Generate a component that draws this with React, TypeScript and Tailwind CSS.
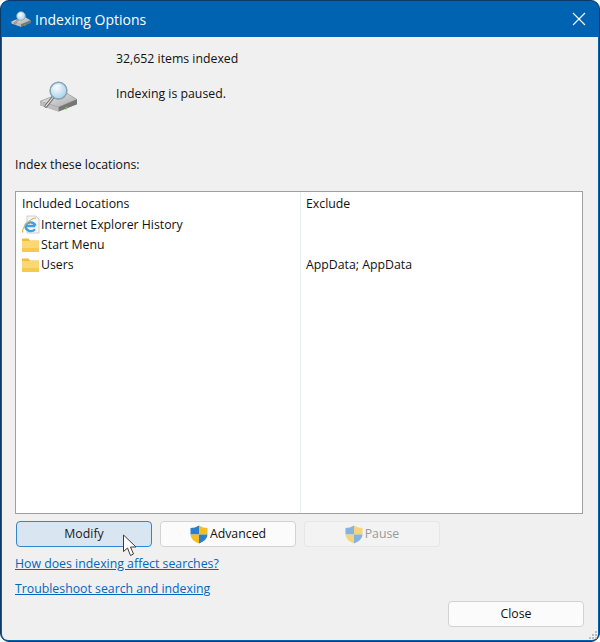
import React from 'react';

const font = { fontFamily: '"Open Sans", "Noto Sans", sans-serif' };

function DriveIcon({ className }: { className: string }) {
  return (
    <svg viewBox="0 0 40 32" className={className}>
      <defs>
        <linearGradient id="driveTop" x1="0" y1="0" x2="1" y2="1">
          <stop offset="0" stopColor="#f0f0f0" />
          <stop offset="1" stopColor="#a8a8a8" />
        </linearGradient>
        <radialGradient id="lens" cx="0.4" cy="0.35" r="0.8">
          <stop offset="0" stopColor="#f4fbff" />
          <stop offset="1" stopColor="#9cc8e4" />
        </radialGradient>
      </defs>
      <path d="M1 21 L26 11 L39 19 L39 24 L20 31.5 L1 25 Z" fill="#8f8f8f" />
      <path d="M1 21 L26 11 L39 19 L20 27 Z" fill="url(#driveTop)" stroke="#949494" strokeWidth="0.6" />
      <path d="M20 27 L39 19 L39 24 L20 31.5 Z" fill="#767676" />
      <path d="M1 21 L20 27 L20 31.5 L1 25 Z" fill="#bdbdbd" />
      <path d="M27 27 L29 26.2 L29 29 L27 29.8 Z" fill="#7ac143" />
      <path d="M7 26 L15 16" stroke="#6a6a6a" strokeWidth="3.2" strokeLinecap="round" />
      <path d="M7 26 L15 16" stroke="#ececec" strokeWidth="1.2" strokeLinecap="round" />
      <circle cx="20" cy="10" r="8.7" fill="url(#lens)" stroke="#86a3b8" strokeWidth="1.6" />
      <path d="M14.5 8 Q17 4 22 4.8" stroke="#ffffff" strokeWidth="1.2" fill="none" />
    </svg>
  );
}

function FolderIcon() {
  return (
    <svg viewBox="0 0 20 16" className="w-5 h-4 shrink-0">
      <path d="M1 1.5 H7.5 L9 3.5 H18 V15 H1 Z" fill="#f2bd35" />
      <rect x="1" y="4" width="17" height="11" fill="#fbd873" />
      <rect x="1" y="11" width="17" height="4" fill="#f6c94f" />
    </svg>
  );
}

function IeIcon() {
  return (
    <svg viewBox="0 0 20 20" className="w-5 h-5 shrink-0">
      <path d="M6 1 H15 L18 4 V18 H6 Z" fill="#f6f6f6" stroke="#bfc4c9" strokeWidth="0.8" />
      <path
        d="M14.2 11 H4.5 M4.2 11 A5.6 5.6 0 0 1 14.6 10.8 M4.2 11 A5.6 5.6 0 0 0 14 14.2"
        fill="none"
        stroke="#3f9fe3"
        strokeWidth="2.3"
      />
      <path d="M2 17.5 Q0.5 14 6 8 Q11 3 15 3" stroke="#e8b23c" strokeWidth="1.1" fill="none" />
    </svg>
  );
}

function Shield({ faded }: { faded?: boolean }) {
  return (
    <svg viewBox="0 0 18 19" className={`w-[18px] h-[19px] shrink-0 ${faded ? 'opacity-55' : ''}`}>
      <path d="M9 0.5 Q13 3 17.5 3 V9.5 H9 Z" fill="#f6bd1f" />
      <path d="M9 0.5 Q5 3 0.5 3 V9.5 H9 Z" fill="#2b7fd0" />
      <path d="M9 9.5 H17.5 Q17.5 15 9 18.5 Z" fill="#2b7fd0" />
      <path d="M0.5 9.5 H9 V18.5 Q0.5 15 0.5 9.5 Z" fill="#f6bd1f" />
    </svg>
  );
}

function Cursor() {
  return (
    <svg viewBox="0 0 16 24" className="absolute left-[107px] top-[13px] w-4 h-6">
      <path
        d="M1.5 1 V17.5 L5.5 14 L8.5 21.5 L11.5 20 L8.5 13 H14 Z"
        fill="#ffffff"
        stroke="#3c3c3c"
        strokeWidth="1"
        strokeLinejoin="round"
      />
    </svg>
  );
}

function Grip() {
  return (
    <svg viewBox="0 0 9 9" className="absolute right-0 bottom-0 w-[9px] h-[9px]" fill="#bdbdbd">
      <rect x="6" y="0" width="2" height="2" />
      <rect x="3" y="3" width="2" height="2" />
      <rect x="6" y="3" width="2" height="2" />
      <rect x="0" y="6" width="2" height="2" />
      <rect x="3" y="6" width="2" height="2" />
      <rect x="6" y="6" width="2" height="2" />
    </svg>
  );
}

const rows = [
  { name: 'Internet Explorer History', icon: <IeIcon />, exclude: '' },
  { name: 'Start Menu', icon: <FolderIcon />, exclude: '' },
  { name: 'Users', icon: <FolderIcon />, exclude: 'AppData; AppData' },
];

export default function App() {
  return (
    <div
      className="w-[600px] h-[642px] flex flex-col overflow-hidden rounded-[9px] bg-[#0063b1] border border-[#0b3a66] text-[12.3px] text-[#111]"
      style={font}
    >
      <div className="h-[36px] shrink-0 flex items-center pl-[10px] pr-[13px] text-white text-[14px]">
        <DriveIcon className="w-[20px] h-[16px] mr-[4px]" />
        <span>Indexing Options</span>
        <svg viewBox="0 0 14 14" className="w-[14px] h-[14px] ml-auto" stroke="#fff" strokeWidth="1.1">
          <path d="M1 1 L13 13 M13 1 L1 13" />
        </svg>
      </div>

      <div className="relative flex-1 flex flex-col mx-px mb-px bg-[#f0f0f0] pl-[13px] pr-[13px] rounded-b-[6px]">
        <div className="flex h-[87px] shrink-0 mt-px">
          <div className="w-[101px] flex justify-start pl-[24px] pt-[43px]">
            <DriveIcon className="w-[39px] h-[31px]" />
          </div>
          <div className="flex flex-col pt-[12px] gap-[17px]">
            <div className="leading-[18px]">32,652 items indexed</div>
            <div className="leading-[18px]">Indexing is paused.</div>
          </div>
        </div>

        <div className="mt-[31px] leading-[18px]">Index these locations:</div>

        <div className="mt-[17px] h-[323px] shrink-0 bg-white border border-[#a0a0a0] flex mr-[2px]">
          <div className="w-[285px] border-r border-[#e6eef6] pl-[6px] pt-[1px]">
            <div className="h-[21px] mt-[1px] leading-[20px]">Included Locations</div>
            {rows.map((r) => (
              <div key={r.name} className="h-[20px] flex items-center -ml-[1px]">
                {r.icon}
                <span className="leading-[20px]">{r.name}</span>
              </div>
            ))}
          </div>
          <div className="flex-1 pl-[5px] pt-[1px]">
            <div className="h-[21px] mt-[1px] leading-[20px]">Exclude</div>
            {rows.map((r) => (
              <div key={r.name} className="h-[20px] leading-[20px]">
                {r.exclude}
              </div>
            ))}
          </div>
        </div>

        <div className="relative mt-[7px] flex gap-[8px] pl-px">
          <button className="w-[136px] h-[26px] rounded-[4px] bg-[#d9e6f2] border border-[#2f86cf] text-[#1a1a1a]">
            Modify
          </button>
          <button className="w-[136px] h-[26px] rounded-[4px] bg-[#fbfbfb] border border-[#d2d2d2] flex items-center justify-center gap-[2px]">
            <Shield />
            Advanced
          </button>
          <button className="w-[136px] h-[26px] rounded-[4px] bg-[#f3f3f3] border border-[#e6e6e6] text-[#9a9a9a] flex items-center justify-center gap-[2px]">
            <Shield faded />
            Pause
          </button>
          <Cursor />
        </div>

        <div className="mt-[8px] flex flex-col items-start gap-[7px] text-[#0067c0]">
          <a className="underline leading-[18px]">How does indexing affect searches?</a>
          <a className="underline leading-[18px]">Troubleshoot search and indexing</a>
        </div>

        <div className="flex justify-end mt-[3px] pr-px">
          <button className="w-[136px] h-[26px] rounded-[4px] bg-[#fbfbfb] border border-[#d2d2d2]">Close</button>
        </div>
        <Grip />
      </div>
    </div>
  );
}
